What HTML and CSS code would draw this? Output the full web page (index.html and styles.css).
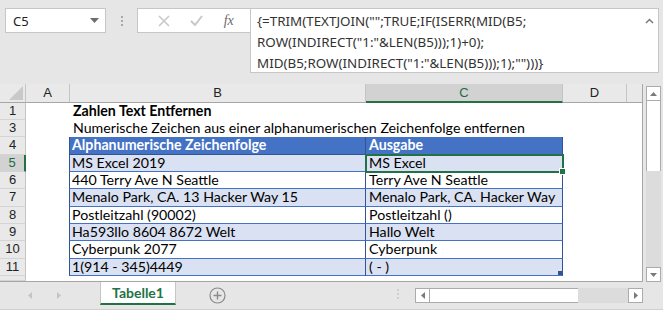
FILE: index.html
```html
<!DOCTYPE html>
<html lang="de">
<head>
    <meta charset="UTF-8">
    <title>Zahlen Text Entfernen</title>
    <link rel="stylesheet" href="styles.css">
</head>
<body>
<div class="app">

    <div class="formula-area">
        <div class="namebox">
            <span>C5</span>
            <svg class="dropdown" width="9" height="5" viewBox="0 0 9 5"><path d="M0 0h9L4.5 5z" fill="#6d6d6d"/></svg>
        </div>
        <div class="grip"><i></i><i></i><i></i></div>
        <div class="fx-buttons">
            <svg width="12" height="12" viewBox="0 0 12 12"><path d="M1 1l10 10M11 1L1 11" stroke="#c8c8c8" stroke-width="1.6"/></svg>
            <svg width="13" height="11" viewBox="0 0 13 11"><path d="M1 6l4 4 7-9" stroke="#c8c8c8" stroke-width="2" fill="none"/></svg>
            <span class="fx">fx</span>
        </div>
        <div class="formula">
            <p>{=TRIM(TEXTJOIN("";TRUE;IF(ISERR(MID(B5;</p>
            <p>ROW(INDIRECT("1:"&amp;LEN(B5)));1)+0);</p>
            <p>MID(B5;ROW(INDIRECT("1:"&amp;LEN(B5)));1);"")))}</p>
            <svg class="collapse" width="9" height="6" viewBox="0 0 9 6"><path d="M1 5l3.5-3.5L8 5" stroke="#7a7a7a" stroke-width="1.5" fill="none"/></svg>
        </div>
    </div>

    <div class="main">
        <div class="sheet">
            <div class="row col-head">
                <div class="rh corner"><svg width="14" height="14" viewBox="0 0 14 14"><path d="M14 0v14H0z" fill="#c9c9c9"/></svg></div>
                <div class="ch a">A</div>
                <div class="ch b">B</div>
                <div class="ch c active">C</div>
                <div class="ch d">D</div>
                <div class="ch e"></div>
            </div>

            <div class="row h17">
                <div class="rh">1</div><div class="cell a"></div>
                <div class="cell b title">Zahlen Text Entfernen</div>
                <div class="cell c"></div><div class="cell d"></div><div class="cell e"></div>
            </div>
            <div class="row h17">
                <div class="rh">3</div><div class="cell a"></div>
                <div class="cell b">Numerische Zeichen aus einer alphanumerischen Zeichenfolge entfernen</div>
                <div class="cell c"></div><div class="cell d"></div><div class="cell e"></div>
            </div>
            <div class="row h18">
                <div class="rh">4</div><div class="cell a"></div>
                <div class="cell b t-head first">Alphanumerische Zeichenfolge</div>
                <div class="cell c t-head">Ausgabe</div>
                <div class="cell d"></div><div class="cell e"></div>
            </div>
            <div class="row h17">
                <div class="rh active">5</div><div class="cell a"></div>
                <div class="cell b t band first">MS Excel 2019</div>
                <div class="cell c t band selected">MS Excel</div>
                <div class="cell d"></div><div class="cell e"></div>
            </div>
            <div class="row h17">
                <div class="rh">6</div><div class="cell a"></div>
                <div class="cell b t first">440 Terry Ave N Seattle</div>
                <div class="cell c t">Terry Ave N Seattle</div>
                <div class="cell d"></div><div class="cell e"></div>
            </div>
            <div class="row h18">
                <div class="rh">7</div><div class="cell a"></div>
                <div class="cell b t band first">Menalo Park, CA. 13 Hacker Way 15</div>
                <div class="cell c t band">Menalo Park, CA. Hacker Way</div>
                <div class="cell d"></div><div class="cell e"></div>
            </div>
            <div class="row h17">
                <div class="rh">8</div><div class="cell a"></div>
                <div class="cell b t first">Postleitzahl (90002)</div>
                <div class="cell c t">Postleitzahl ()</div>
                <div class="cell d"></div><div class="cell e"></div>
            </div>
            <div class="row h17">
                <div class="rh">9</div><div class="cell a"></div>
                <div class="cell b t band first">Ha593llo 8604 8672 Welt</div>
                <div class="cell c t band">Hallo Welt</div>
                <div class="cell d"></div><div class="cell e"></div>
            </div>
            <div class="row h18">
                <div class="rh">10</div><div class="cell a"></div>
                <div class="cell b t first">Cyberpunk 2077</div>
                <div class="cell c t">Cyberpunk</div>
                <div class="cell d"></div><div class="cell e"></div>
            </div>
            <div class="row h17">
                <div class="rh">11</div><div class="cell a"></div>
                <div class="cell b t band first">1(914 - 345)4449</div>
                <div class="cell c t band last">( - )</div>
                <div class="cell d"></div><div class="cell e"></div>
            </div>
            <div class="row h5">
                <div class="rh"></div><div class="cell a"></div><div class="cell b"></div>
                <div class="cell c"></div><div class="cell d"></div><div class="cell e"></div>
            </div>
        </div>

        <div class="vscroll">
            <div class="sbtn"><svg width="7" height="4" viewBox="0 0 7 4"><path d="M0 4h7L3.5 0z" fill="#7a7a7a"/></svg></div>
            <div class="vthumb"></div>
            <div class="vtrack"></div>
            <div class="sbtn"><svg width="7" height="4" viewBox="0 0 7 4"><path d="M0 0h7L3.5 4z" fill="#7a7a7a"/></svg></div>
        </div>
    </div>

    <div class="tabs">
        <div class="nav">
            <svg width="4" height="7" viewBox="0 0 4 7"><path d="M4 0v7L0 3.5z" fill="#c4c4c4"/></svg>
            <svg width="4" height="7" viewBox="0 0 4 7"><path d="M0 0v7L4 3.5z" fill="#c4c4c4"/></svg>
        </div>
        <div class="tab">Tabelle1</div>
        <svg class="add" width="17" height="17" viewBox="0 0 17 17">
            <circle cx="8.5" cy="8.5" r="7.5" fill="none" stroke="#8a8a8a" stroke-width="1.2"/>
            <path d="M8.5 4.5v8M4.5 8.5h8" stroke="#8a8a8a" stroke-width="1.4"/>
        </svg>
        <div class="grip tab-grip"><i></i><i></i><i></i></div>
        <div class="hscroll">
            <div class="sbtn"><svg width="4" height="7" viewBox="0 0 4 7"><path d="M4 0v7L0 3.5z" fill="#7a7a7a"/></svg></div>
            <div class="hthumb"></div>
            <div class="htrack"></div>
            <div class="sbtn"><svg width="4" height="7" viewBox="0 0 4 7"><path d="M0 0v7L4 3.5z" fill="#7a7a7a"/></svg></div>
        </div>
    </div>

</div>
</body>
</html>
```

FILE: styles.css
```css
body {
    margin: 0;
    padding: 0;
    background-color: #e6e6e6;
    font-family: 'Lato', sans-serif;
}

.app {
    width: 663px;
    height: 310px;
    overflow: hidden;
    background-color: #e6e6e6;
}

/* formula bar */

.formula-area {
    display: flex;
    align-items: flex-start;
    height: 84px;
    padding: 8px 0 0 5px;
    box-sizing: border-box;
}

.namebox {
    width: 101px;
    height: 25px;
    box-sizing: border-box;
    background-color: #fff;
    border: 1px solid #c6c6c6;
    display: flex;
    align-items: center;
    justify-content: space-between;
    padding: 0 6px 0 7px;
    font-family: 'Noto Sans', sans-serif;
    font-size: 13px;
    color: #222;
}

.grip {
    flex: none;
    width: 31px;
    height: 25px;
    display: flex;
    flex-direction: column;
    align-items: center;
    justify-content: center;
    gap: 2px;
}

.grip i {
    display: block;
    width: 2px;
    height: 2px;
    background-color: #a8a8a8;
}

.fx-buttons {
    width: 113px;
    height: 25px;
    box-sizing: border-box;
    background-color: #fff;
    border: 1px solid #c6c6c6;
    border-right: none;
    display: flex;
    align-items: center;
    justify-content: space-around;
    padding: 0 6px 0 10px;
}

.fx {
    font-family: 'Liberation Serif', serif;
    font-style: italic;
    font-size: 14px;
    color: #6d6d6d;
}

.formula {
    position: relative;
    width: 409px;
    height: 65px;
    box-sizing: border-box;
    background-color: #fff;
    border: 1px solid #c6c6c6;
    padding: 2px 0 0 6px;
    font-family: 'Noto Sans', sans-serif;
    font-size: 13.4px;
    color: #333;
}

.formula p {
    margin: 0;
    line-height: 21px;
    white-space: nowrap;
}

.collapse {
    position: absolute;
    right: 4px;
    top: 9px;
}

/* sheet */

.main {
    display: flex;
    align-items: flex-start;
    height: 198px;
}

.sheet {
    width: 642px;
    background-color: #fff;
    border-right: 1px solid #a6a6a6;
    border-bottom: 1px solid #a6a6a6;
}

.row {
    display: flex;
    height: 17px;
}

.h17 { height: 17px; }
.h18 { height: 18px; }
.h5 { height: 5px; }

.rh {
    width: 26px;
    flex: none;
    box-sizing: border-box;
    background-color: #e9e9e9;
    border-right: 1px solid #c4c4c4;
    border-bottom: 1px solid #d4d4d4;
    color: #222;
    font-size: 13px;
    font-family: 'Liberation Sans', sans-serif;
    text-align: center;
    line-height: 16px;
}

.rh.active {
    background-color: #d2d2d2;
    border-right: 2px solid #217346;
    color: #1e6b41;
}

.a { width: 44px; flex: none; }
.b { width: 296px; flex: none; }
.c { width: 197px; flex: none; }
.d { width: 64px; flex: none; }
.e { width: 15px; flex: none; }

.col-head {
    height: 19px;
    background-color: #e9e9e9;
}

.corner {
    border-bottom: 1px solid #a6a6a6;
    display: flex;
    align-items: flex-end;
    justify-content: flex-end;
    padding: 0 2px 2px 0;
    height: 19px;
}

.ch {
    box-sizing: border-box;
    border-right: 1px solid #c4c4c4;
    border-bottom: 1px solid #a6a6a6;
    text-align: center;
    font-family: 'Liberation Sans', sans-serif;
    font-size: 13px;
    line-height: 18px;
    color: #222;
}

.ch.active {
    background-color: #d2d2d2;
    border-bottom: 2px solid #217346;
    color: #1e6b41;
}

.ch.e {
    border-right: none;
}

.cell {
    box-sizing: border-box;
    font-size: 14.2px;
    color: #000;
    white-space: nowrap;
    line-height: 16px;
    padding-left: 3px;
}

.title {
    font-weight: bold;
}

.t-head {
    background-color: #4472c4;
    color: #fff;
    font-weight: bold;
    border-bottom: 1px solid #2f5597;
    border-right: 1px solid #2f5597;
}

.t {
    border-bottom: 1px solid #4472c4;
    border-right: 1px solid #2f5597;
}

.first {
    border-left: 1px solid #2f5597;
    padding-left: 2px;
}

.cell.b.first {
    margin-left: -1px;
    width: 297px;
}

.band {
    background-color: #d9e1f2;
}

.last {
    position: relative;
}

.last::after {
    content: "";
    position: absolute;
    right: 0;
    bottom: 0;
    width: 4px;
    height: 4px;
    background-color: #2f5597;
}

.selected {
    position: relative;
    outline: 2px solid #217346;
    outline-offset: -1px;
    z-index: 1;
}

.selected::after {
    content: "";
    position: absolute;
    right: -4px;
    bottom: -4px;
    width: 5px;
    height: 5px;
    background-color: #217346;
    border: 1px solid #fff;
}

/* scrollbars */

.vscroll {
    margin: 2px 0 0 3px;
    width: 15px;
    height: 196px;
    display: flex;
    flex-direction: column;
    background-color: #dcdcdc;
}

.sbtn {
    flex: none;
    width: 15px;
    height: 15px;
    box-sizing: border-box;
    background-color: #fff;
    border: 1px solid #ababab;
    display: flex;
    align-items: center;
    justify-content: center;
}

.vthumb {
    height: 70px;
    background-color: #fff;
    border-left: 1px solid #ababab;
    border-right: 1px solid #ababab;
    box-sizing: border-box;
}

.vtrack {
    flex: 1;
}

/* sheet tabs */

.tabs {
    display: flex;
    align-items: flex-start;
    height: 28px;
    border-bottom: 1px solid #d0d0d0;
    box-sizing: border-box;
}

.nav {
    flex: none;
    width: 100px;
    display: flex;
    gap: 25px;
    justify-content: flex-start;
    padding: 10px 0 0 28px;
    box-sizing: border-box;
}

.tab {
    flex: none;
    width: 76px;
    height: 23px;
    box-sizing: border-box;
    background-color: #fff;
    border: 1px solid #c6c6c6;
    border-top: none;
    border-bottom: 2px solid #217346;
    text-align: center;
    font-weight: bold;
    font-size: 14px;
    line-height: 21px;
    color: #217346;
}

.add {
    flex: none;
    margin: 5px 0 0 33px;
}

.tab-grip {
    margin: 3px 0 0 169px;
    width: 6px;
    height: 17px;
}

.tab-grip i {
    background-color: #cfcfcf;
}

.hscroll {
    flex: none;
    margin: 6px 0 0 14px;
    display: flex;
    width: 228px;
    height: 15px;
    background-color: #dcdcdc;
}

.hthumb {
    width: 148px;
    background-color: #fff;
    border-top: 1px solid #ababab;
    border-bottom: 1px solid #ababab;
    box-sizing: border-box;
}

.htrack {
    flex: 1;
}
```
